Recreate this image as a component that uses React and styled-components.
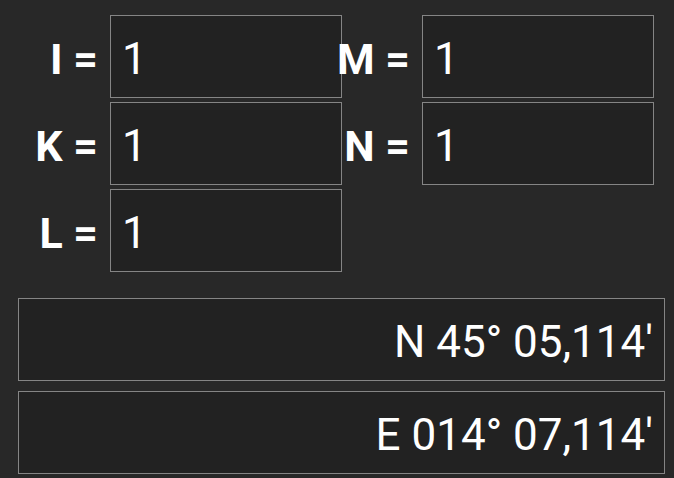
import styled, { createGlobalStyle } from "styled-components";

const GlobalStyle = createGlobalStyle`
  html, body {
    margin: 0;
    padding: 0;
    background: #282828;
    font-family: Roboto, "Liberation Sans", sans-serif;
  }
`;

const Page = styled.div`
  width: 674px;
  height: 478px;
  background: #282828;
  color: #ffffff;
  padding-top: 15px;
  box-sizing: border-box;
`;

const VarGrid = styled.div`
  display: grid;
  grid-template-columns: 110px 232px 80px 232px;
  grid-auto-rows: 83px;
  row-gap: 4px;
`;

const Label = styled.div`
  display: flex;
  align-items: center;
  justify-content: flex-end;
  padding-right: 12px;
  padding-top: 5px;
  font-size: 43px;
  font-weight: 700;
  white-space: nowrap;
`;

const Field = styled.div`
  display: flex;
  align-items: center;
  justify-content: ${(p) => (p.$right ? "flex-end" : "flex-start")};
  box-sizing: border-box;
  background: #222222;
  border: 1px solid #858585;
  font-size: 44px;
  font-weight: 400;
  padding: 5px ${(p) => (p.$right ? "11px" : "8px")} 0 11px;
  white-space: nowrap;
`;

const Empty = styled.div``;

const Coords = styled.div`
  display: flex;
  flex-direction: column;
  gap: 10px;
  margin: 26px 9px 0 18px;
`;

const CoordField = styled(Field)`
  height: 83px;
`;

const vars = [
  ["I", "1", "M", "1"],
  ["K", "1", "N", "1"],
  ["L", "1", null, null],
];

export default function App() {
  return (
    <>
      <GlobalStyle />
      <Page>
        <VarGrid>
          {vars.map(([a, av, b, bv]) => (
            <>
              <Label key={a}>{a} =</Label>
              <Field>{av}</Field>
              {b ? <Label>{b} =</Label> : <Empty />}
              {b ? <Field>{bv}</Field> : <Empty />}
            </>
          ))}
        </VarGrid>
        <Coords>
          <CoordField $right>N 45° 05,114'</CoordField>
          <CoordField $right>E 014° 07,114'</CoordField>
        </Coords>
      </Page>
    </>
  );
}
